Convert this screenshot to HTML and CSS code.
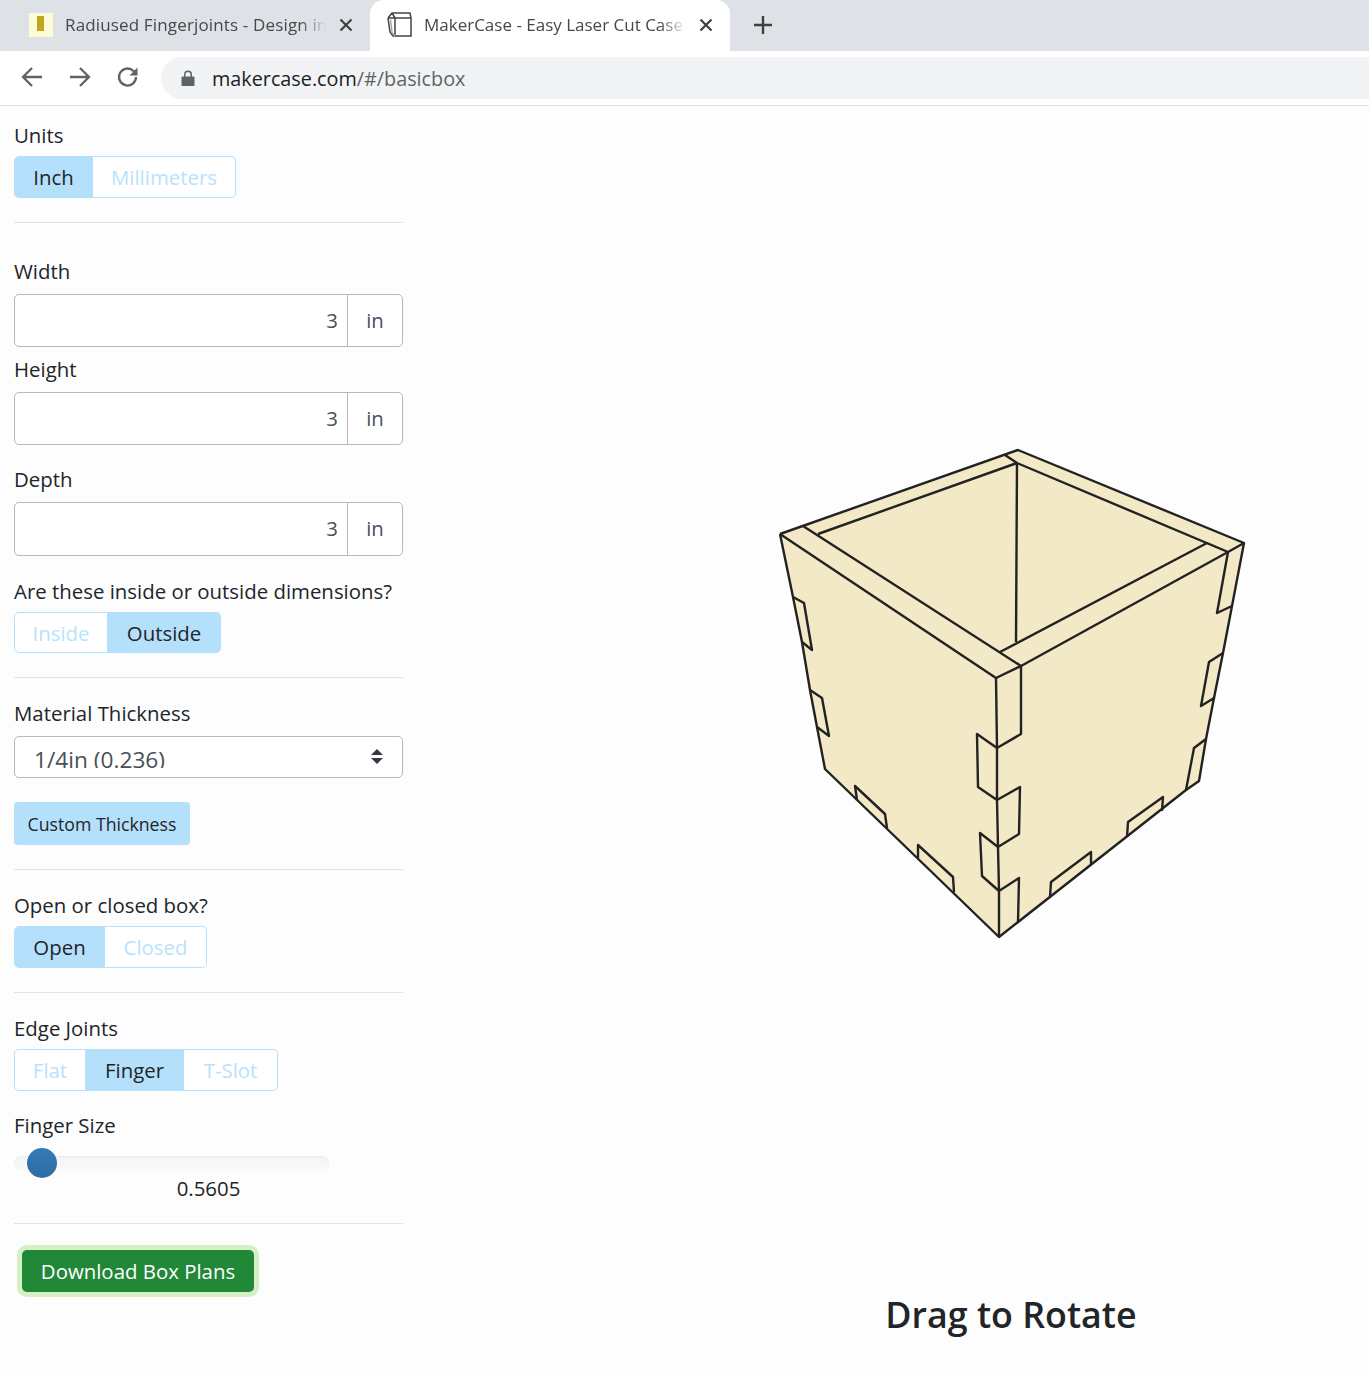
FILE: index.html
```html
<!doctype html>
<html>
<head>
  <meta charset="UTF-8">
  <title>MakerCase - Easy Laser Cut Case Design</title>
  <link rel="stylesheet" href="styles.css">
</head>
<body>
  <div class="tabstrip">
    <div class="tab tab-first">
      <span class="favicon"><i></i></span>
      <span class="tab-title">Radiused Fingerjoints - Design in Fusion 360</span>
      <svg class="tab-close" width="14" height="14" viewBox="0 0 14 14"><path d="M1.5 1.5l11 11M12.5 1.5l-11 11"/></svg>
    </div>
    <div class="tab tab-active">
      <svg class="cube" width="26" height="26" viewBox="0 0 26 26"><path d="M8 6h16v18H8zM1 6l4-5h18l1 5M1 6h7M1 6l2 14 3 4h2M5 1l3 5"/><path class="cube-grey" d="M3.500 7.500l1.500 13 3 3.500"/></svg>
      <span class="tab-title">MakerCase - Easy Laser Cut Case Design</span>
      <svg class="tab-close" width="14" height="14" viewBox="0 0 14 14"><path d="M1.5 1.5l11 11M12.5 1.5l-11 11"/></svg>
    </div>
    <svg class="new-tab" width="20" height="20" viewBox="0 0 20 20"><path d="M10 1v18M1 10h18"/></svg>
  </div>

  <div class="toolbar">
    <svg class="nav-icon" width="24" height="24" viewBox="0 0 24 24"><path d="M22 12H4M12 3l-9 9 9 9"/></svg>
    <svg class="nav-icon" width="24" height="24" viewBox="0 0 24 24"><path d="M2 12h18M12 3l9 9-9 9"/></svg>
    <svg class="nav-icon" width="24" height="24" viewBox="0 0 24 24"><path d="M20 12a8.500 8.500 0 1 1-2.500-6L20.500 9"/><path class="solid" d="M21.500 2.500v8h-8z"/></svg>
    <div class="omnibox">
      <svg class="lock" width="14" height="18" viewBox="0 0 14 18"><path d="M3 8V5.500a4 4 0 0 1 8 0V8h-1.500V5.500a2.500 2.500 0 0 0-5 0V8zM1.500 7.500h11a1 1 0 0 1 1 1v7.500a1 1 0 0 1-1 1h-11a1 1 0 0 1-1-1V8.500a1 1 0 0 1 1-1z"/></svg>
      <span class="url">makercase.com<span class="url-path">/#/basicbox</span></span>
    </div>
  </div>

  <div class="page">
    <div class="sidebar">
      <div class="label">Units</div>
      <div class="btn-group">
        <span class="seg on w-inch">Inch</span>
        <span class="seg w-mm">Millimeters</span>
      </div>
      <hr class="rule">

      <div class="label label-field label-first">Width</div>
      <div class="field">
        <input class="field-input" type="text" value="3">
        <span class="field-unit">in</span>
      </div>
      <div class="label label-field">Height</div>
      <div class="field">
        <input class="field-input" type="text" value="3">
        <span class="field-unit">in</span>
      </div>
      <div class="label label-field label-gap">Depth</div>
      <div class="field field-tall">
        <input class="field-input" type="text" value="3">
        <span class="field-unit">in</span>
      </div>
      <div class="label label-dims">Are these inside or outside dimensions?</div>
      <div class="btn-group btn-group-short">
        <span class="seg w-inside">Inside</span>
        <span class="seg on w-outside">Outside</span>
      </div>
      <hr class="rule">

      <div class="label">Material Thickness</div>
      <div class="select">
        <span class="select-text">1/4in (0.236)</span>
        <span class="select-arrows"></span>
      </div>
      <div class="custom-btn">Custom Thickness</div>
      <hr class="rule">

      <div class="label">Open or closed box?</div>
      <div class="btn-group">
        <span class="seg on w-open">Open</span>
        <span class="seg w-closed">Closed</span>
      </div>
      <hr class="rule">

      <div class="label">Edge Joints</div>
      <div class="btn-group">
        <span class="seg w-flat">Flat</span>
        <span class="seg on w-finger">Finger</span>
        <span class="seg w-tslot">T-Slot</span>
      </div>
      <div class="label label-gap">Finger Size</div>
      <div class="slider"><span class="slider-handle"></span></div>
      <div class="slider-value">0.5605</div>
      <hr class="rule rule-tight">

      <div class="download-btn">Download Box Plans</div>
    </div>

    <div class="stage">
      <svg class="box" width="484" height="507" viewBox="770 440 484 507">
        <polygon class="box-fill" points="780,534 1018,450 1244,543 1232,606 1223,653 1214,698 1206,739 1199,781 1186,790 1000,937 825,769"/>
        <!-- outline -->
        <path d="M780,534 L1018,450 L1244,543 L1232,606 L1223,653 M793,597 L780,534 M802,642 L793,597 M802,642 L810,690 L817,727 M817,727 L825,769 L999,937 L1186,790 L1199,781 L1206,739 M1214,698 L1223,653"/>
        <!-- rim -->
        <path d="M780,534 L996,678 L1021,666 L803,526 M818,534 L1017,463 L1228,552 M1005,455 L1017,463 M1017,463 L1016,642 M1000,652 L1207,543 M1021,666 L1228,552 L1244,543 M1207,543 L1228,552"/>
        <!-- right side fingers -->
        <path d="M1228,552 L1217,613 L1232,606 M1223,653 L1209,662 L1201,706 L1214,698 L1206,739 L1194,748 L1186,790"/>
        <!-- left side fingers -->
        <path d="M793,597 L804,603 L812,650 L802,642 M810,690 L822,698 L829,736 L817,727"/>
        <!-- bottom fingers -->
        <path d="M857,800 L855,786 L885,814 L887,828 M918,858 L918,845 L953,877 L954,892 M1050,897 L1051,882 L1091,852 L1091,864 M1127,837 L1128,822 L1163,797 L1162,811"/>
        <!-- front corner -->
        <path d="M996,678 L997,748 L997,800 L998,847 L999,891 L999,937 M997,748 L977,734 L978,787 L997,800 M998,847 L980,833 L982,876 L999,891 M1021,666 L1021,734 L997,748 M997,800 L1020,787 L1019,834 L998,847 M999,891 L1019,878 L1018,922"/>
      </svg>
      <h1 class="drag-note">Drag to Rotate</h1>
    </div>
  </div>
</body>
</html>
```

FILE: styles.css
```css
*{box-sizing:border-box;}
html,body{margin:0;padding:0;}
body{background:#fdfdfd;
     color:#212529;
     font-family:"Open Sans","Liberation Sans",sans-serif;
     font-size:20.400px;
     height:1375px;
     overflow:hidden;}

/* browser chrome */
.tabstrip{display:flex;
          align-items:flex-end;
          height:51px;
          background:#dee1e6;}
.tab{display:flex;
     align-items:center;
     height:51px;
     padding-bottom:1px;
     font-size:17px;
     color:#45484c;}
.tab-first{width:370px;padding-left:29px;padding-right:15px;letter-spacing:0.150px;}
.tab-active{width:360px;
            padding-left:17px;
            padding-right:15px;
            background:#fff;
            border-radius:14px 14px 0 0;}
.favicon{flex:none;
         display:flex;
         justify-content:center;
         width:24px;
         height:24px;
         padding-top:3px;
         margin-right:12px;
         background:#fdfcd8;}
.favicon i{display:block;width:7px;height:15px;margin-right:2px;background:#c4a51f;}
.cube{flex:none;margin-right:11px;fill:none;stroke:#444;stroke-width:1.500;}
.cube .cube-grey{stroke:#aaa;}
.tab-title{flex:1;
           margin-top:-2px;
           overflow:hidden;
           white-space:nowrap;
           -webkit-mask-image:linear-gradient(to right,#000 90%,transparent 100%);
           mask-image:linear-gradient(to right,#000 90%,transparent 100%);}
.tab-close{flex:none;margin-left:13px;margin-right:2px;fill:none;stroke:#3c4043;stroke-width:2.200;}
.new-tab{align-self:center;margin-left:23px;margin-bottom:2px;fill:none;stroke:#3c4043;stroke-width:2.400;}

.toolbar{display:flex;
         align-items:center;
         height:55px;
         padding-left:20px;
         background:#fff;
         border-bottom:1px solid #e2e2e2;}
.nav-icon{flex:none;margin-right:24px;margin-top:-3px;fill:none;stroke:#5f6368;stroke-width:2.300;}
.nav-icon .solid{fill:#5f6368;stroke:none;}
.omnibox{flex:1;
         display:flex;
         align-items:center;
         height:42px;
         margin-left:-3px;
         padding-left:20px;
         background:#f1f3f4;
         border-radius:21px 0 0 21px;}
.lock{flex:none;margin-right:17px;fill:#5f6368;}
.url{font-size:19.800px;color:#202124;}
.url-path{color:#5f6368;}

/* page */
.page{display:flex;}
.sidebar{flex:none;width:417px;padding:14px 14px 0;}
.label{height:32px;line-height:30px;margin-bottom:4px;}
.label-field{margin-bottom:6px;}
.label-first{margin-top:33px;}
.label-gap{margin-top:19px;}
.label-dims{margin-top:20px;margin-bottom:4px;}

.rule{height:1px;margin:24px 0 20px;border:0;background:#e3e3e3;}
.rule-tight{margin-top:18px;}

.btn-group{display:flex;height:42px;}
.btn-group-short{height:41px;}
.seg{display:flex;
     align-items:center;
     justify-content:center;
     color:#b8e2fc;
     background:#fff;
     border:1px solid #b5e0fb;
     border-left-width:0;}
.seg:first-child{border-left-width:1px;border-radius:5px 0 0 5px;}
.seg:last-child{border-radius:0 5px 5px 0;}
.seg.on{background:#b5e0fb;color:#212529;}
.w-inch{width:79px;}
.w-mm{width:143px;}
.w-inside{width:94px;}
.w-outside{width:113px;}
.w-open{width:91px;}
.w-closed{width:102px;}
.w-flat{width:72px;}
.w-finger{width:98px;}
.w-tslot{width:94px;}

.field{display:flex;
       height:53px;
       margin-bottom:7px;
       background:#fff;
       border:1px solid #b8b8b8;
       border-radius:5px;}
.field-tall{height:54px;margin-bottom:0;}
.field-input{flex:1;
             min-width:0;
             padding:0 9px 2px 0;
             border:0;
             background:none;
             outline:none;
             text-align:right;
             color:#495057;
             font:inherit;}
.field-unit{flex:none;
            width:55px;
            text-align:center;
            line-height:51px;
            color:#495057;
            border-left:1px solid #b8b8b8;}

.select{display:flex;
        align-items:flex-start;
        justify-content:space-between;
        height:42px;
        margin-top:6px;
        padding:6px 19px 0 19px;
        background:#fff;
        border:1px solid #b8b8b8;
        border-radius:5px;
        font-size:22.700px;
        color:#495057;}
.select-text{display:block;height:25px;line-height:33px;overflow:hidden;}
.select-arrows{display:block;margin-top:6px;width:12px;height:15px;position:relative;}
.select-arrows:before,.select-arrows:after{content:"";
                                           position:absolute;
                                           left:0;
                                           border-left:6px solid transparent;
                                           border-right:6px solid transparent;}
.select-arrows:before{top:0;border-bottom:6px solid #343a40;}
.select-arrows:after{bottom:0;border-top:6px solid #343a40;}

.custom-btn{display:flex;
            align-items:center;
            justify-content:center;
            width:176px;
            height:43px;
            margin-top:24px;
            font-size:17.700px;
            background:#b5e0fb;
            border-radius:4px;}

.slider{position:relative;
        width:315px;
        height:15px;
        margin-top:14px;
        background:linear-gradient(#f5f5f5,#f9f9f9);
        border-radius:8px;
        box-shadow:inset 0 1px 2px rgba(0,0,0,0.06);}
.slider-handle{position:absolute;
               left:13px;
               top:-8px;
               width:30px;
               height:30px;
               border-radius:50%;
               background:linear-gradient(#337ab7,#2e6da4);}
.slider-value{height:32px;
              margin-top:2px;
              line-height:30px;
              text-align:center;}

.download-btn{display:flex;
              align-items:center;
              justify-content:center;
              width:232px;
              height:42px;
              margin:26px 0 0 8px;
              color:#fff;
              background:#218838;
              border-radius:5px;
              box-shadow:0 0 0 5px #d7efc5;}

.stage{flex:1;
       display:flex;
       flex-direction:column;
       align-items:center;
       padding:334px 0 0 236px;}
.box{margin-left:2px;}
.box-fill{fill:#f3e9c6;stroke:none;}
.box path{fill:none;stroke:#222;stroke-width:2.400;stroke-linejoin:round;}
.drag-note{margin:0;
           padding-top:342px;
           font-size:35.800px;
           font-weight:600;
           line-height:50px;}
```
